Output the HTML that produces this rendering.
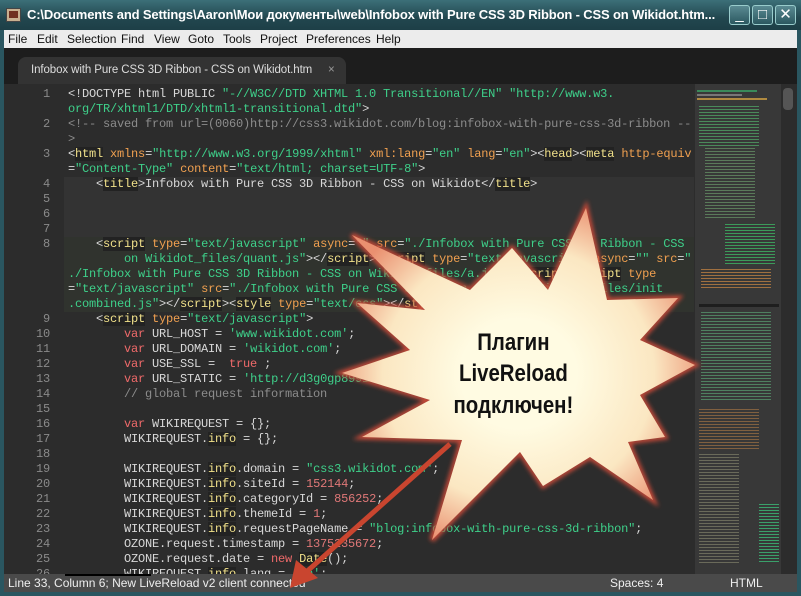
<!DOCTYPE html>
<html><head><meta charset="utf-8"><style>
*{margin:0;padding:0;box-sizing:border-box}
body{width:801px;height:596px;overflow:hidden;background:#2a5660;font-family:"Liberation Sans","DejaVu Sans",sans-serif;position:relative}
.title{position:absolute;left:0;top:0;width:726px;height:30px;background:linear-gradient(#3c6f78,#22474f 60%,#1d3f47);color:#fff;font-weight:bold;font-size:13px;line-height:30px;padding-left:27px;white-space:nowrap;overflow:hidden;letter-spacing:-0.15px}
.tbg{position:absolute;left:0;top:0;width:801px;height:30px;background:linear-gradient(#3c6f78,#22474f 60%,#1d3f47)}
.ico{position:absolute;left:6px;top:8px;width:15px;height:14px;background:#c8b090;border:1px solid #444}
.ico:after{content:"";position:absolute;left:2px;top:2px;width:9px;height:7px;background:#703020}
.btn{position:absolute;top:5px;width:21px;height:20px;border:1px solid #9cc;border-radius:3px;background:linear-gradient(#5a8a92,#2b5860);color:#fff;text-align:center;font-size:15px;line-height:18px}
.menu{position:absolute;left:4px;top:30px;width:793px;height:18px;background:#ececec;font-size:12px;line-height:18px;color:#111}
.menu span{position:absolute;top:0}
.tabs{position:absolute;left:4px;top:48px;width:793px;height:36px;background:#1d1d1d}
.tab{position:absolute;left:14px;top:9px;width:328px;height:27px;background:#333;border-radius:8px 8px 0 0;color:#ddd;font-size:11.5px;line-height:26px;padding-left:13px;letter-spacing:-0.1px}
.ed{position:absolute;left:4px;top:84px;width:793px;height:490px;background:#2c2c2c;overflow:hidden}
.hl{position:absolute;left:60px;width:630px;background:#333}
.code{position:absolute;left:0;top:3px;font-family:"Liberation Mono",monospace;font-size:12px;line-height:15px;color:#d8d8d8;white-space:pre;letter-spacing:-0.2px}
.ln{position:absolute;left:0;width:46px;text-align:right;color:#8a8a8a}
.tx{position:absolute;left:64px}
.t{color:#f0e08a;background:#222}.a{color:#f0a050}.s{color:#3ed08a}.c{color:#8c8c8c}.k{color:#f06a6a}.n{color:#e07878}.p{color:#d8d8d8}
.mm{position:absolute;left:691px;top:0;width:86px;height:490px;background:#383838}
.mm i{position:absolute;height:2px;display:block}
.sb{position:absolute;left:779px;top:4px;width:10px;height:22px;background:#555;border-radius:4px}
.status{position:absolute;left:4px;top:574px;width:793px;height:18px;background:#4a4a4a;color:#eee;font-size:12px;line-height:18px}
</style></head><body>
<div class="tbg"></div>
<div class="title"><div class="ico"></div>C:\Documents and Settings\Aaron\Мои документы\web\Infobox with Pure CSS 3D Ribbon - CSS on Wikidot.htm...</div>
<div class="btn" style="left:729px">_</div><div class="btn" style="left:752px">□</div><div class="btn" style="left:775px">✕</div>
<div class="menu"><span style="left:4px">File</span><span style="left:33px">Edit</span><span style="left:63px">Selection</span><span style="left:117px">Find</span><span style="left:150px">View</span><span style="left:184px">Goto</span><span style="left:219px">Tools</span><span style="left:256px">Project</span><span style="left:302px">Preferences</span><span style="left:372px">Help</span></div>
<div class="tabs"><div class="tab">Infobox with Pure CSS 3D Ribbon - CSS on Wikidot.htm<span style="position:absolute;left:310px;color:#999">×</span></div></div>
<div class="ed">
<div class="hl" style="top:93px;height:60px"></div>
<div class="hl" style="top:153px;height:75px;background:#30332e"></div>
<div class="code">
<div class="ln" style="top:0">1</div><div class="tx" style="top:0"><span class="p">&lt;!DOCTYPE html PUBLIC </span><span class="s">"-//W3C//DTD XHTML 1.0 Transitional//EN" "http://www.w3.</span></div>
<div class="tx" style="top:15px"><span class="s">org/TR/xhtml1/DTD/xhtml1-transitional.dtd"</span>&gt;</div>
<div class="ln" style="top:30px">2</div><div class="tx c" style="top:30px">&lt;!-- saved from url=(0060)http://css3.wikidot.com/blog:infobox-with-pure-css-3d-ribbon --</div>
<div class="tx c" style="top:45px">&gt;</div>
<div class="ln" style="top:60px">3</div><div class="tx" style="top:60px">&lt;<span class="t">html</span> <span class="a">xmlns</span>=<span class="s">"http://www.w3.org/1999/xhtml"</span> <span class="a">xml:lang</span>=<span class="s">"en"</span> <span class="a">lang</span>=<span class="s">"en"</span>&gt;&lt;<span class="t">head</span>&gt;&lt;<span class="t">meta</span> <span class="a">http-equiv</span></div>
<div class="tx" style="top:75px">=<span class="s">"Content-Type"</span> <span class="a">content</span>=<span class="s">"text/html; charset=UTF-8"</span>&gt;</div>
<div class="ln" style="top:90px">4</div><div class="tx" style="top:90px">    &lt;<span class="t">title</span>&gt;Infobox with Pure CSS 3D Ribbon - CSS on Wikidot&lt;/<span class="t">title</span>&gt;</div>
<div class="ln" style="top:105px">5</div><div class="ln" style="top:120px">6</div><div class="ln" style="top:135px">7</div>
<div class="ln" style="top:150px">8</div><div class="tx" style="top:150px">    &lt;<span class="t">script</span> <span class="a">type</span>=<span class="s">"text/javascript"</span> <span class="a">async</span>=<span class="s">""</span> <span class="a">src</span>=<span class="s">"./Infobox with Pure CSS 3D Ribbon - CSS</span></div>
<div class="tx" style="top:165px"><span class="s">        on Wikidot_files/quant.js"</span>&gt;&lt;/<span class="t">script</span>&gt;&lt;<span class="t">script</span> <span class="a">type</span>=<span class="s">"text/javascript"</span> <span class="a">async</span>=<span class="s">""</span> <span class="a">src</span>=<span class="s">"</span></div>
<div class="tx" style="top:180px"><span class="s">./Infobox with Pure CSS 3D Ribbon - CSS on Wikidot_files/a.js"</span>&gt;&lt;/<span class="t">script</span>&gt;&lt;<span class="t">script</span> <span class="a">type</span></div>
<div class="tx" style="top:195px">=<span class="s">"text/javascript"</span> <span class="a">src</span>=<span class="s">"./Infobox with Pure CSS 3D Ribbon - CSS on Wikidot_files/init</span></div>
<div class="tx" style="top:210px"><span class="s">.combined.js"</span>&gt;&lt;/<span class="t">script</span>&gt;&lt;<span class="t">style</span> <span class="a">type</span>=<span class="s">"text/css"</span>&gt;&lt;/<span class="t">style</span>&gt;</div>
<div class="ln" style="top:225px">9</div><div class="tx" style="top:225px">    &lt;<span class="t">script</span> <span class="a">type</span>=<span class="s">"text/javascript"</span>&gt;</div>
<div class="ln" style="top:240px">10</div><div class="tx" style="top:240px">        <span class="k">var</span> URL_HOST = <span class="s">'www.wikidot.com'</span>;</div>
<div class="ln" style="top:255px">11</div><div class="tx" style="top:255px">        <span class="k">var</span> URL_DOMAIN = <span class="s">'wikidot.com'</span>;</div>
<div class="ln" style="top:270px">12</div><div class="tx" style="top:270px">        <span class="k">var</span> USE_SSL =  <span class="k">true</span> ;</div>
<div class="ln" style="top:285px">13</div><div class="tx" style="top:285px">        <span class="k">var</span> URL_STATIC = <span class="s">'http://d3g0gp89917ko0.cloudfront.net/'</span>;</div>
<div class="ln" style="top:300px">14</div><div class="tx c" style="top:300px">        // global request information</div>
<div class="ln" style="top:315px">15</div>
<div class="ln" style="top:330px">16</div><div class="tx" style="top:330px">        <span class="k">var</span> WIKIREQUEST = {};</div>
<div class="ln" style="top:345px">17</div><div class="tx" style="top:345px">        WIKIREQUEST.<span class="t">info</span> = {};</div>
<div class="ln" style="top:360px">18</div>
<div class="ln" style="top:375px">19</div><div class="tx" style="top:375px">        WIKIREQUEST.<span class="t">info</span>.domain = <span class="s">"css3.wikidot.com"</span>;</div>
<div class="ln" style="top:390px">20</div><div class="tx" style="top:390px">        WIKIREQUEST.<span class="t">info</span>.siteId = <span class="n">152144</span>;</div>
<div class="ln" style="top:405px">21</div><div class="tx" style="top:405px">        WIKIREQUEST.<span class="t">info</span>.categoryId = <span class="n">856252</span>;</div>
<div class="ln" style="top:420px">22</div><div class="tx" style="top:420px">        WIKIREQUEST.<span class="t">info</span>.themeId = <span class="n">1</span>;</div>
<div class="ln" style="top:435px">23</div><div class="tx" style="top:435px">        WIKIREQUEST.<span class="t">info</span>.requestPageName = <span class="s">"blog:infobox-with-pure-css-3d-ribbon"</span>;</div>
<div class="ln" style="top:450px">24</div><div class="tx" style="top:450px">        OZONE.request.timestamp = <span class="n">1375235672</span>;</div>
<div class="ln" style="top:465px">25</div><div class="tx" style="top:465px">        OZONE.request.date = <span class="k">new</span> <span class="t">Date</span>();</div>
<div class="ln" style="top:480px">26</div><div class="tx" style="top:480px">        WIKIREQUEST.<span class="t">info</span>.lang = <span class="s">'en'</span>;</div>
</div>
<div class="mm">
<i style="left:2px;top:6px;width:60px;background:#3a8a5a"></i><i style="left:2px;top:10px;width:45px;background:#777"></i><i style="left:2px;top:14px;width:70px;background:#b08a40"></i>
<i style="left:4px;top:22px;width:60px;height:40px;background:repeating-linear-gradient(#4a8a5a 0 1px,transparent 1px 3px)"></i>
<i style="left:10px;top:64px;width:50px;height:70px;background:repeating-linear-gradient(#5a7a5a 0 1px,transparent 1px 3px)"></i>
<i style="left:30px;top:140px;width:50px;height:40px;background:repeating-linear-gradient(#3c9a5a 0 1px,transparent 1px 3px)"></i>
<i style="left:6px;top:185px;width:70px;height:20px;background:repeating-linear-gradient(#a07040 0 1px,transparent 1px 3px)"></i>
<i style="left:4px;top:220px;width:80px;height:3px;background:#1e1e1e"></i>
<i style="left:6px;top:228px;width:70px;height:90px;background:repeating-linear-gradient(#4f8060 0 1px,transparent 1px 3px)"></i>
<i style="left:4px;top:325px;width:60px;height:40px;background:repeating-linear-gradient(#806040 0 1px,transparent 1px 3px)"></i>
<i style="left:4px;top:370px;width:40px;height:110px;background:repeating-linear-gradient(#6a6a5a 0 1px,transparent 1px 3px)"></i>
<i style="left:64px;top:420px;width:20px;height:60px;background:repeating-linear-gradient(#3aa06a 0 1px,transparent 1px 3px)"></i>
</div>
<div class="sb"></div>
</div>
<div class="status"><span style="position:absolute;left:4px">Line 33, Column 6; New LiveReload v2 client connected</span><span style="position:absolute;left:61px;top:0;width:86px;height:2px;background:#000"></span><span style="position:absolute;left:606px">Spaces: 4</span><span style="position:absolute;left:726px">HTML</span></div>
<svg style="position:absolute;left:0;top:0" width="801" height="596">
<defs><radialGradient id="g" cx="0.5" cy="0.5" r="0.55"><stop offset="0.3" stop-color="#fffbe2"/><stop offset="0.7" stop-color="#fbe7c2"/><stop offset="1" stop-color="#ea9070"/></radialGradient>
<filter id="f"><feGaussianBlur stdDeviation="2"/></filter></defs>
<polygon filter="url(#f)" fill="none" stroke="#c84a38" stroke-width="5" points="586,208 607,300 678,298 640,340 695,365 640,395 665,437 628,442 653,500 590,457 543,486 520,452 432,540 462,440 362,437 430,400 342,373 410,350 357,303 425,310 352,235 470,290 512,248 548,290"/>
<polygon fill="url(#g)" points="586,208 607,300 678,298 640,340 695,365 640,395 665,437 628,442 653,500 590,457 543,486 520,452 432,540 462,440 362,437 430,400 342,373 410,350 357,303 425,310 352,235 470,290 512,248 548,290"/>
<g font-family="Liberation Sans, sans-serif" font-size="24" font-weight="bold" fill="#111" text-anchor="middle" transform="scale(0.85,1)">
<text x="604" y="350">Плагин</text><text x="604" y="381">LiveReload</text><text x="604" y="413">подключен!</text></g>
<line x1="450" y1="444" x2="304" y2="574" stroke="#c9452f" stroke-width="5"/>
<polygon points="290,588 296,560 318,578" fill="#c9452f"/>
</svg>
</body></html>
